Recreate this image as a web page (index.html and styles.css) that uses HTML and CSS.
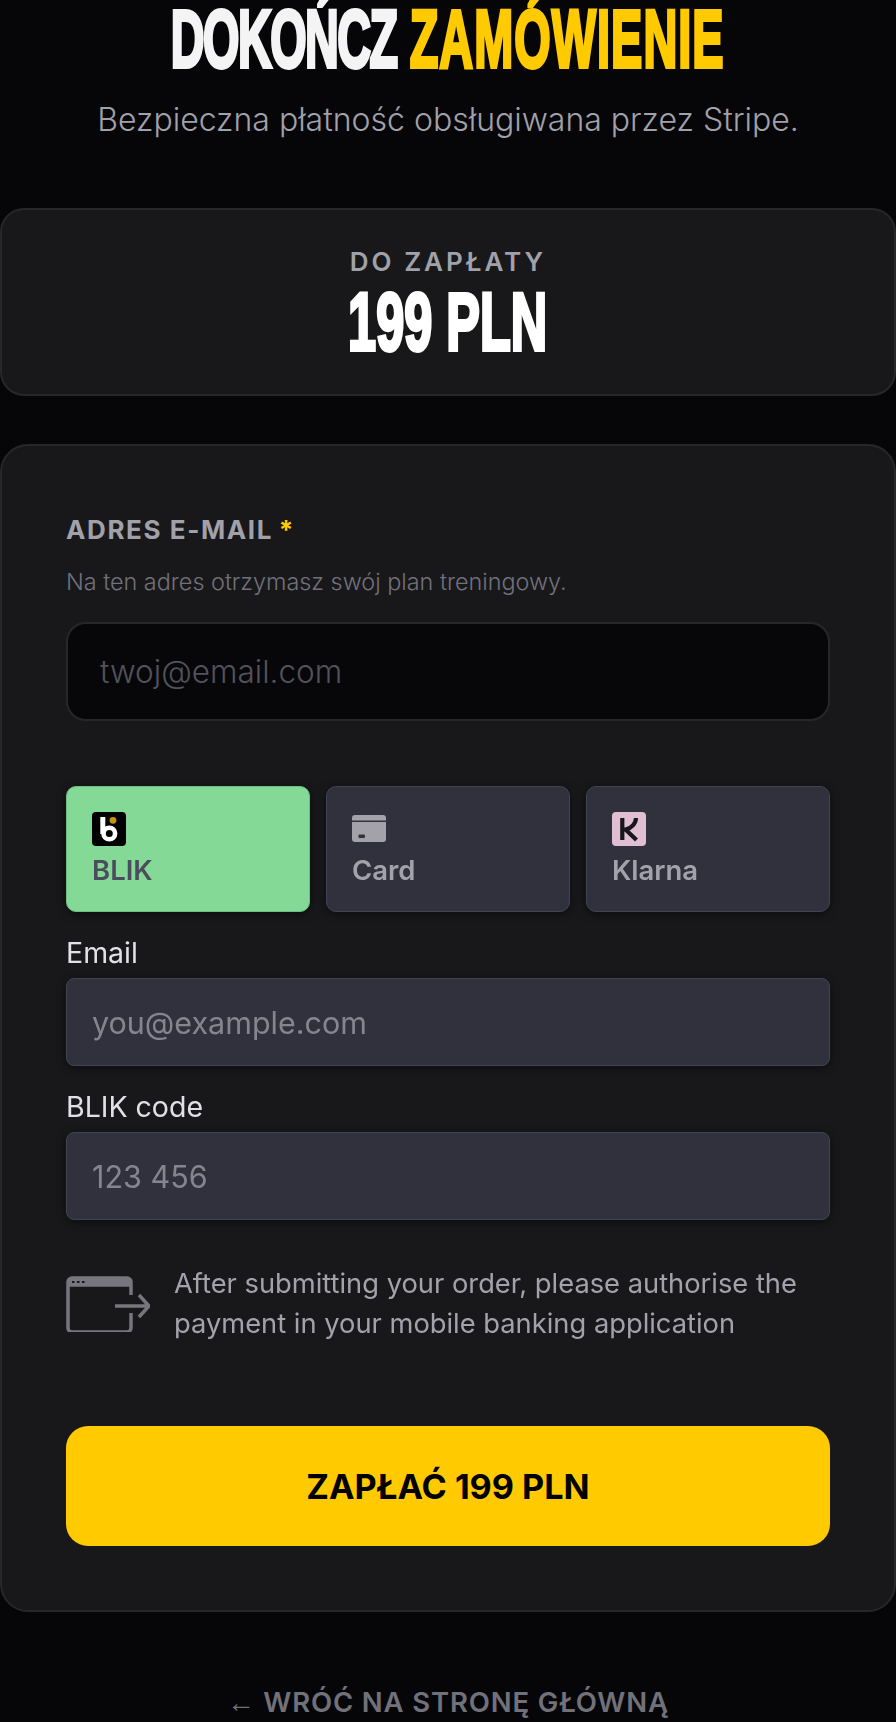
FILE: index.html
```html
<!DOCTYPE html>
<html lang="pl">
<head>
    <meta charset="UTF-8">
    <meta name="viewport" content="width=device-width, initial-scale=1.0">
    <title>Dokończ zamówienie</title>
    <link rel="stylesheet" href="styles.css">
</head>
<body>

<header class="page-head">
    <h1 class="page-title"><span class="squeeze title-text"><span class="title-first">DOKOŃCZ</span> <span class="accent title-second">ZAMÓWIENIE</span></span></h1>
    <p class="page-sub">Bezpieczna płatność obsługiwana przez Stripe.</p>
</header>

<section class="card amount-card">
    <div class="amount-label">DO ZAPŁATY</div>
    <div class="amount-value"><span class="squeeze value-text">199 PLN</span></div>
</section>

<section class="card form-card">
    <label class="field-label" for="email">ADRES E-MAIL <span class="accent required">*</span></label>
    <p class="field-hint">Na ten adres otrzymasz swój plan treningowy.</p>
    <input class="email-input" type="email" id="email" placeholder="twoj@email.com">

    <!-- Stripe payment element -->
    <div class="stripe">
        <div class="tabs">
            <div class="tab tab-active">
                <svg class="tab-icon" viewBox="0 0 34 34">
                    <rect width="34" height="34" rx="4" fill="#000"/>
                    <path d="M10.800 5v17" stroke="#fff" stroke-width="5" fill="none"/>
                    <circle cx="17.300" cy="21.500" r="5.800" stroke="#fff" stroke-width="4.600" fill="none"/>
                    <circle cx="21" cy="8.300" r="3.400" fill="#c8920c"/>
                </svg>
                <span>BLIK</span>
            </div>
            <div class="tab">
                <svg class="tab-icon" viewBox="0 0 34 34">
                    <path d="M0 6a3 3 0 0 1 3-3h28a3 3 0 0 1 3 3v2.500H0z" fill="#a3a2ab"/>
                    <path d="M0 10h34v17a3 3 0 0 1-3 3H3a3 3 0 0 1-3-3z" fill="#a3a2ab"/>
                    <rect x="6.500" y="22.500" width="6.500" height="3.500" rx="1" fill="#30313d"/>
                </svg>
                <span>Card</span>
            </div>
            <div class="tab">
                <svg class="tab-icon" viewBox="0 0 34 34">
                    <rect width="34" height="34" rx="4" fill="#e0bfd2"/>
                    <path d="M10.300 6v22M24 6c0 5-4 10-10.500 11.500l11 10.500" stroke="#17171c" stroke-width="4.200" fill="none"/>
                </svg>
                <span>Klarna</span>
            </div>
        </div>

        <label class="stripe-label">Email</label>
        <div class="stripe-input">you@example.com</div>

        <label class="stripe-label">BLIK code</label>
        <div class="stripe-input">123 456</div>

        <div class="notice">
            <svg class="notice-icon" viewBox="0 0 84 56" fill="none" stroke="#77767f" stroke-width="3.500">
                <path d="M65 19V6a4 4 0 0 0-4-4H6a4 4 0 0 0-4 4v46a4 4 0 0 0 4 4h55a4 4 0 0 0 4-4V37"/>
                <path d="M2 6a4 4 0 0 1 4-4h55a4 4 0 0 1 4 4v4H2z" fill="#77767f" stroke="none"/>
                <path d="M2 9h63"/>
                <path d="M49 30h33M73 19l10 11-10 11"/>
                <path d="M6 6h2.500M11 6h2.500M16 6h2.500" stroke="#18181b" stroke-width="2"/>
            </svg>
            <p>After submitting your order, please authorise the payment in your mobile banking application</p>
        </div>
    </div>

    <button class="pay-button" type="button">ZAPŁAĆ 199 PLN</button>
</section>

<a class="back-link" href="#"><span class="back-arrow">←</span> WRÓĆ NA STRONĘ GŁÓWNĄ</a>

</body>
</html>
```

FILE: styles.css
```css
html {
    background-color: #060609;
}
body {
    margin: 0;
    height: 1722px;
    overflow: hidden;
    font-family: Inter, sans-serif;
    background-color: #060609;
    color: #fff;
}
.accent {
    color: #ffcb00;
}
.squeeze {
    display: inline-block;
    flex: none;
    white-space: pre;
    font-family: "Liberation Sans", sans-serif;
    font-weight: 700;
    font-size: 52px;
    line-height: 62px;
    -webkit-text-stroke: 2.400px currentColor;
}
.title-text {
    transform: scale(0.9, 1.58);
}
.title-first {
    letter-spacing: -1.700px;
}
.title-second {
    letter-spacing: 1.200px;
}
.value-text {
    transform: scale(0.97, 1.58);
}
.page-head {
    text-align: center;
    height: 208px;
    padding-top: 8px;
    box-sizing: border-box;
}
.page-title {
    display: flex;
    justify-content: center;
    margin: 0;
    height: 62px;
    line-height: 62px;
    color: #f4f4f5;
    white-space: nowrap;
}
.page-sub {
    margin: 30px 0 0;
    font-size: 32px;
    line-height: 40px;
    font-weight: 300;
    color: #a1a1aa;
}
.card {
    box-sizing: border-box;
    width: 896px;
    background-color: #18181b;
    border: 2px solid #27272a;
}
.amount-card {
    height: 188px;
    border-radius: 24px;
    text-align: center;
    padding-top: 36px;
}
.amount-label {
    font-size: 26px;
    line-height: 32px;
    font-weight: 600;
    letter-spacing: 3px;
    color: #a1a1aa;
}
.amount-value {
    margin-top: 13px;
    height: 62px;
    line-height: 62px;
}
.form-card {
    height: 1168px;
    margin-top: 48px;
    border-radius: 28px;
    padding: 68px 64px 0;
}
.field-label {
    display: block;
    font-size: 26px;
    line-height: 32px;
    font-weight: 700;
    letter-spacing: 1.600px;
    color: #a1a1aa;
}
.required {
    margin-left: -2px;
}
.field-hint {
    margin: 20px 0 0;
    font-size: 23.400px;
    line-height: 32px;
    font-weight: 300;
    color: #71717a;
}
.email-input {
    display: block;
    box-sizing: border-box;
    width: 100%;
    height: 99px;
    margin-top: 24px;
    padding: 0 32px;
    font-family: Inter, sans-serif;
    font-size: 31.500px;
    font-weight: 300;
    color: #fff;
    background-color: #070709;
    border: 2px solid #27272a;
    border-radius: 20px;
}
.email-input::placeholder {
    color: #52525b;
}
.stripe {
    margin-top: 65px;
    filter: blur(0.5px);
}
.tabs {
    display: flex;
    gap: 16px;
}
.tab {
    flex: 1;
    box-sizing: border-box;
    height: 126px;
    padding: 25px 25px 0;
    border: 1px solid #424353;
    border-radius: 10px;
    background-color: #30313d;
    box-shadow: 0 2px 8px rgba(0, 0, 0, 0.5);
    color: #a3a2ab;
    font-size: 27.500px;
    font-weight: 600;
    line-height: 32px;
}
.tab span {
    display: block;
    margin-top: 8px;
}
.tab-icon {
    display: block;
    width: 34px;
    height: 34px;
}
.tab-active {
    background-color: #85d996;
    border-color: #6fbf80;
    color: #4a4d5c;
}
.stripe-label {
    display: block;
    margin-top: 25px;
    font-size: 28.500px;
    line-height: 32px;
    color: #e0e0e6;
}
.stripe-input {
    box-sizing: border-box;
    height: 88px;
    margin-top: 9px;
    padding: 0 25px;
    display: flex;
    align-items: center;
    border: 1px solid #424353;
    border-radius: 8px;
    background-color: #30313d;
    box-shadow: 0 2px 8px rgba(0, 0, 0, 0.5);
    font-size: 30.500px;
    color: #85858f;
}
.notice {
    display: flex;
    align-items: center;
    gap: 24px;
    margin-top: 44px;
}
.notice-icon {
    flex: none;
    width: 84px;
    height: 56px;
}
.notice p {
    margin: 0;
    font-size: 27.300px;
    line-height: 39.500px;
    color: #a3a2ab;
}
.pay-button {
    display: block;
    width: 100%;
    height: 120px;
    margin-top: 83px;
    border: 0;
    border-radius: 22px;
    background-color: #ffcb00;
    color: #000;
    font-family: Inter, sans-serif;
    font-size: 34.200px;
    font-weight: 700;
}
.back-link {
    display: block;
    margin-top: 72px;
    text-align: center;
    font-size: 27.500px;
    line-height: 36px;
    font-weight: 600;
    letter-spacing: 0.850px;
    color: #71717a;
    text-decoration: none;
}
.back-arrow {
    font-family: "Liberation Sans", sans-serif;
    font-weight: 400;
}
```
